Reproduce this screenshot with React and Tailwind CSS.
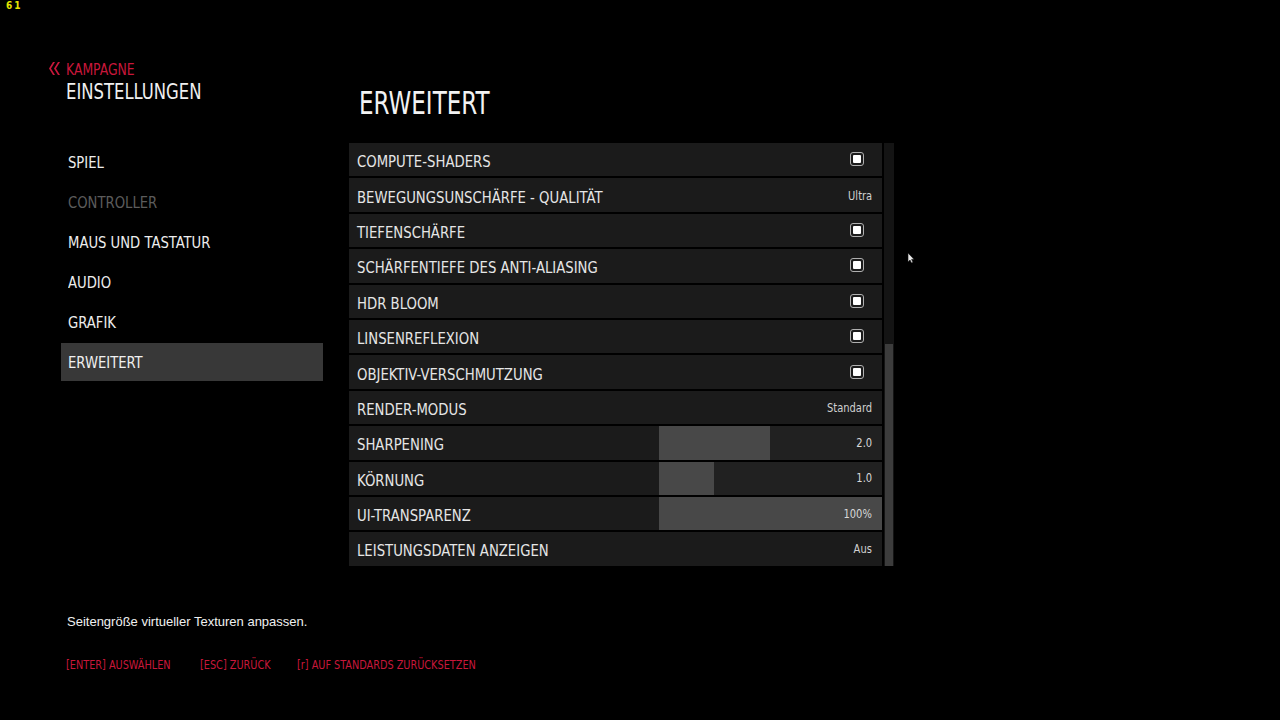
import React from "react";

const N = "font-['Liberation_Sans_Narrow','DejaVu_Sans_Condensed',sans-serif]";

const rows = [
  { label: "COMPUTE-SHADERS", type: "check" },
  { label: "BEWEGUNGSUNSCHÄRFE - QUALITÄT", type: "value", value: "Ultra" },
  { label: "TIEFENSCHÄRFE", type: "check" },
  { label: "SCHÄRFENTIEFE DES ANTI-ALIASING", type: "check" },
  { label: "HDR BLOOM", type: "check" },
  { label: "LINSENREFLEXION", type: "check" },
  { label: "OBJEKTIV-VERSCHMUTZUNG", type: "check" },
  { label: "RENDER-MODUS", type: "value", value: "Standard" },
  { label: "SHARPENING", type: "slider", value: "2.0", fill: 111 },
  { label: "KÖRNUNG", type: "slider", value: "1.0", fill: 55 },
  { label: "UI-TRANSPARENZ", type: "slider", value: "100%", fill: 223 },
  { label: "LEISTUNGSDATEN ANZEIGEN", type: "value", value: "Aus" },
];

const nav = [
  { label: "SPIEL" },
  { label: "CONTROLLER", dim: true },
  { label: "MAUS UND TASTATUR" },
  { label: "AUDIO" },
  { label: "GRAFIK" },
  { label: "ERWEITERT", active: true },
];

function Check() {
  return (
    <div className="w-[14px] h-[14px] border-[1.5px] border-[#b0b0b0] rounded-[3px] flex items-center justify-center">
      <div className="w-[8px] h-[8px] bg-white rounded-[1px]" />
    </div>
  );
}

function Row({ r }) {
  return (
    <div className="h-[33.4px] bg-[#1b1b1b] flex items-center">
      <div className={`pl-[8px] flex-1 text-[16px] leading-none text-[#e6e6e6] pt-[5px] ${N}`}>
        <span className="inline-block origin-left scale-x-[0.92] whitespace-nowrap">{r.label}</span>
      </div>
      {r.type === "check" && (
        <div className="pr-[18px] pb-[1px]">
          <Check />
        </div>
      )}
      {r.type === "value" && (
        <div className={`pr-[10px] pt-[1px] text-[12px] leading-none text-[#d0d0d0] ${N}`}>
          <span className="inline-block origin-right scale-x-[0.92]">{r.value}</span>
        </div>
      )}
      {r.type === "slider" && (
        <div className="relative w-[223px] h-full bg-[#212121]">
          <div className="absolute left-0 top-0 h-full bg-[#484848]" style={{ width: r.fill }} />
          <div className={`relative h-full flex items-center justify-end pr-[10px] text-[12px] leading-none text-[#d8d8d8] ${N}`}>
            <span className="inline-block origin-right scale-x-[0.92]">{r.value}</span>
          </div>
        </div>
      )}
    </div>
  );
}

export default function App() {
  return (
    <div className="w-[1280px] h-[720px] bg-black relative overflow-hidden flex flex-col">
      <div className={`absolute left-[6px] top-[1px] text-[10px] font-bold leading-none text-[#e5e500] tracking-[2px] ${N}`}>61</div>

      <div className="flex h-[600px]">
        {/* Left column */}
        <div className="w-[349px] flex flex-col">
          <div className="h-[143px] pt-[62px] pl-[48px]">
            <div className="flex items-center h-[16px]">
              <svg width="12" height="13" viewBox="0 0 12 13" className="mr-[6px] -mt-[4px]">
                <path d="M5 0 L1 6.5 L5 13 L7 13 L3 6.5 L7 0 Z" fill="#c8173a" />
                <path d="M10 0 L6 6.5 L10 13 L12 13 L8 6.5 L12 0 Z" fill="#c8173a" />
              </svg>
              <span className={`inline-block origin-left scale-x-[0.92] text-[15px] leading-none text-[#c8173a] ${N}`}>KAMPAGNE</span>
            </div>
            <div className={`mt-[3px] pl-[18px] text-[21px] leading-[22px] text-[#f0f0f0] ${N}`}>
              <span className="inline-block origin-left scale-x-[0.87]">EINSTELLUNGEN</span>
            </div>
          </div>
          <div className="pl-[61px] w-[323px] flex flex-col gap-[2px]">
            {nav.map((n) => (
              <div
                key={n.label}
                className={`h-[38px] flex items-center pl-[7px] pt-[2px] text-[16px] leading-none ${N} ${
                  n.active ? "bg-[#383838] text-[#f0f0f0]" : n.dim ? "text-[#5c5c5c]" : "text-[#ededed]"
                }`}
              >
                <span className="inline-block origin-left scale-x-[0.916] whitespace-nowrap">{n.label}</span>
              </div>
            ))}
          </div>
        </div>

        {/* Right column */}
        <div className="w-[546px] flex flex-col">
          <div className={`h-[143px] pt-[87px] pl-[10px] text-[32px] leading-none text-[#f2f2f2] ${N}`}>
            <span className="inline-block origin-left scale-x-[0.8]">ERWEITERT</span>
          </div>
          <div className="flex gap-[2px]">
            <div className="w-[533px] flex flex-col gap-[2px]">
              {rows.map((r) => (
                <Row key={r.label} r={r} />
              ))}
            </div>
            <div className="w-[10px] bg-[#141414] flex flex-col justify-end">
              <div className="mx-[1px] h-[222px] bg-[#3c3c3c]" />
            </div>
          </div>
        </div>

        <div className="flex-1" />
      </div>

      {/* Footer */}
      <div className="pl-[67px] pt-[15px] text-[13px] leading-none text-[#f0f0f0] font-['Liberation_Sans',sans-serif]">
        Seitengröße virtueller Texturen anpassen.
      </div>
      <div className={`pl-[66px] pt-[31px] flex text-[12px] leading-none text-[#c8173a] ${N}`}>
        <span className="w-[134px] inline-block origin-left scale-x-[0.9] whitespace-nowrap">[ENTER] AUSWÄHLEN</span>
        <span className="w-[97px] inline-block origin-left scale-x-[0.9] whitespace-nowrap">[ESC] ZURÜCK</span>
        <span className="inline-block origin-left scale-x-[0.9] whitespace-nowrap">[r] AUF STANDARDS ZURÜCKSETZEN</span>
      </div>

      {/* Cursor */}
      <svg className="absolute left-[907px] top-[252px]" width="8" height="12" viewBox="0 0 8 12">
        <path d="M1 1 L1 10 L3 8 L4.5 11 L6 10.3 L4.6 7.4 L7 7.2 Z" fill="#e8e8e8" stroke="#111" strokeWidth="0.6" />
      </svg>
    </div>
  );
}
